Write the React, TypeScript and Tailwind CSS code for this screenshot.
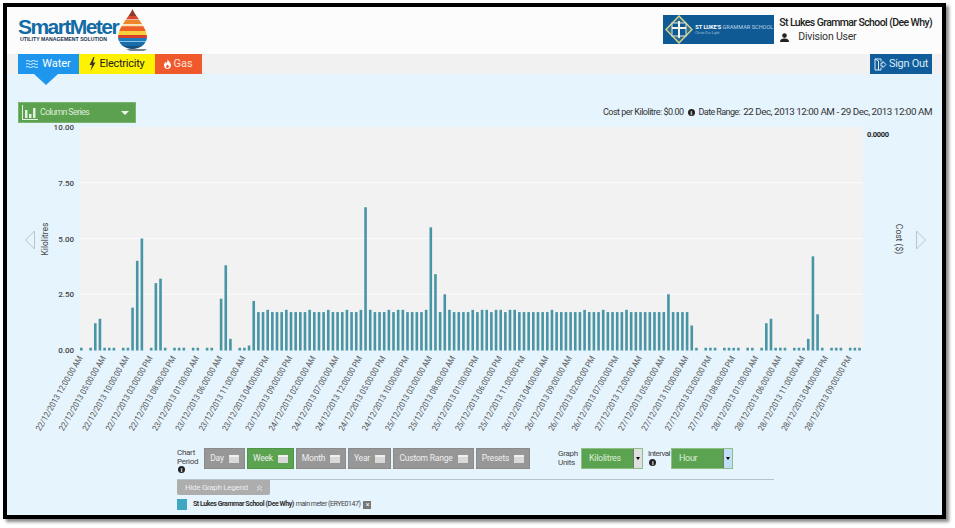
import React from "react";

const head = [
  0.1, 0, 0.1, 1.2, 1.4, 0.1, 0.1, 0.1, 0, 0.1, 0.1, 1.9, 4, 5, 0, 0.1, 3, 3.2, 0.1, 0, 0.1, 0.1, 0.1, 0, 0.1, 0.1, 0,
  0.1, 0.1, 0, 2.3, 3.8, 0.5, 0, 0.1, 0.1, 0.2, 2.2,
];
const tail = [
  0.1, 0, 0.1, 0.1, 0.1, 0, 0.1, 0.1, 0.1, 0.1, 0, 0.1, 0.1, 0, 0.1, 1.2, 1.4, 0.1, 0.1, 0.1, 0, 0.1, 0.1, 0.1, 0.5,
  4.2, 1.6, 0.1, 0, 0.1, 0.1, 0.1, 0, 0.1, 0.1, 0.1,
];
const highs = [40, 44, 49, 53, 57, 60, 62, 66, 68, 69, 74, 79, 84, 86, 87, 89, 90, 92, 93, 101, 108, 112, 117];
const spikes: Record<number, number> = { 61: 6.4, 75: 5.5, 76: 3.4, 78: 2.5, 126: 2.5, 131: 1.1 };

const usage = Array.from({ length: 168 }, (_, i) => {
  if (i < head.length) return head[i];
  if (i >= 132) return tail[i - 132];
  if (spikes[i]) return spikes[i];
  return highs.includes(i) ? 1.8 : 1.7;
});

const barX = (i: number) => 81.3 + i * 4.66;
const valueY = (v: number) => 350 - v * 22.3;

function axisLabel(i: number) {
  const day = 22 + Math.floor(i / 24);
  const hour = i % 24;
  const h = hour % 12 === 0 ? 12 : hour % 12;
  return `${day}/12/2013 ${String(h).padStart(2, "0")}:00:00 ${hour < 12 ? "AM" : "PM"}`;
}

const labelIdx = Array.from({ length: 34 }, (_, i) => i * 5);

// y, height, colour of each band in the drop
const dropBands: [number, number, string][] = [
  [0, 8, "#8f3a2c"],
  [8, 3.4, "#d9472b"],
  [12, 4.2, "#f0862a"],
  [16.8, 1.4, "#fbe7a8"],
  [18.2, 4.8, "#ee5f2a"],
  [23, 4, "#f8cf3c"],
  [27, 3, "#d8402c"],
  [30, 3, "#1c7dbd"],
  [33, 1, "#8cc4e6"],
  [34, 4, "#1a6ca8"],
  [38, 3, "#15507e"],
];

function Chart() {
  return (
    <svg viewBox="7 124 935 316" className="block w-[935px] h-[316px] mt-[1px]" fontFamily="Roboto, sans-serif">
      <rect x="80" y="127" width="783" height="223" fill="#f2f2f2" />
      {[7.5, 5, 2.5].map((v) => (
        <line key={v} x1="80" x2="863" y1={valueY(v)} y2={valueY(v)} stroke="#fbfbfb" strokeWidth="1" />
      ))}
      {usage.map((v, i) =>
        v > 0 ? (
          <rect key={i} x={barX(i) - 1.3} y={valueY(v)} width="2.6" height={v * 22.3 + 0.5} fill="#4795a6" />
        ) : null
      )}
      {["10.00", "7.50", "5.00", "2.50", "0.00"].map((t, i) => (
        <text key={t} x="74" y={130 + i * 55.8} textAnchor="end" fontSize="8" fontWeight="500" fill="#444">
          {t}
        </text>
      ))}
      <text x="889" y="137" textAnchor="end" fontSize="7.5" fontWeight="700" fill="#222" textLength="22">
        0.0000
      </text>
      <text transform="translate(47.5 239) rotate(-90)" textAnchor="middle" fontSize="8.5" fill="#444">
        Kilolitres
      </text>
      <text transform="translate(896 239) rotate(90)" textAnchor="middle" fontSize="8.5" fill="#444">
        Cost ($)
      </text>
      <path d="M34.5 231 L25.5 240 L34.5 249 Z" fill="none" stroke="#b9c4ca" />
      <path d="M916.5 231 L925.5 240 L916.5 249 Z" fill="none" stroke="#b9c4ca" />
      {labelIdx.map((i) => (
        <text
          key={i}
          transform={`translate(${barX(i) + 1.5} 358) rotate(-60)`}
          textAnchor="end"
          fontSize="8.5"
          fill="#555"
          textLength="85"
          lengthAdjust="spacingAndGlyphs"
        >
          {axisLabel(i)}
        </text>
      ))}
    </svg>
  );
}

function Logo() {
  return (
    <div className="flex items-start">
      <div className="w-[100px] pt-[10px] whitespace-nowrap">
        <div className="text-[21px] leading-[20px] font-bold tracking-[-1.55px] text-[#126ba5] [font-family:'Liberation_Sans',sans-serif]">
          SmartMeter
        </div>
        <div className="pl-[2px] text-[5.2px] leading-[5px] font-bold text-[#16324f] [font-family:'Liberation_Sans',sans-serif]">
          UTILITY MANAGEMENT SOLUTION
        </div>
      </div>
      <svg width="30" height="44" viewBox="0 0 30 44" className="mt-[1px]">
        <defs>
          <clipPath id="drop">
            <path d="M14.5 1 C17 8 29 19 29 29 C29 36 22 41 14.5 41 C7 41 0 36 0 29 C0 19 12 8 14.5 1 Z" />
          </clipPath>
        </defs>
        <path d="M8 41 H29 L26 43 H12 Z" fill="#77858f" />
        <g clipPath="url(#drop)">
          {dropBands.map(([y, h, c]) => (
            <rect key={y} x="0" y={y} width="30" height={h} fill={c} />
          ))}
        </g>
      </svg>
    </div>
  );
}

function SchoolLogo() {
  return (
    <div className="w-[111px] h-[29px] bg-[#0f5a94] flex items-center pl-[2px] shrink-0">
      <svg width="28" height="29" viewBox="0 0 28 29">
        <path d="M14 1 L27 14.5 L14 28 L1 14.5 Z" fill="#2e6e8e" stroke="#d9d48a" strokeWidth="1.4" />
        <rect x="7" y="8" width="14" height="13" fill="#0f5a94" stroke="#e8e8d8" />
        <path d="M14 6 V23 M7 13 H21" stroke="#f4f4e6" strokeWidth="2" />
      </svg>
      <div className="pl-[2px] whitespace-nowrap">
        <div className="text-[5.6px] leading-[7px] text-[#bcd3e6]">
          <span className="font-bold text-white">ST LUKE'S</span> GRAMMAR SCHOOL
        </div>
        <div className="text-[3.5px] leading-[4px] text-[#9fc0da]">Christ Our Light</div>
      </div>
    </div>
  );
}

function Info() {
  return (
    <span className="inline-flex w-[7px] h-[7px] rounded-full bg-[#222] text-white text-[6px] leading-[7px] font-bold justify-center">
      i
    </span>
  );
}

function PeriodButton({ label, w, active }: { label: string; w: string; active?: boolean }) {
  return (
    <div
      className={`${w} h-[21px] flex items-center justify-center gap-[5px] border text-[8.5px] tracking-[-0.2px] text-[#f0f0f0] ${
        active ? "bg-[#5ba351] border-[#4d9445]" : "bg-[#979797] border-[#8a8a8a]"
      }`}
    >
      {label}
      <span className="w-[10px] h-[8px] bg-[#d9d9d9] border-t-2 border-[#f0f0f0]" />
    </div>
  );
}

function UnitSelect({ label, light }: { label: string; light?: boolean }) {
  return (
    <div className="w-[62px] h-[21px] flex border border-[#8fbf87] shrink-0">
      <div className="flex-1 bg-[#5ba351] text-[#dbeed7] text-[9px] leading-[19px] pl-[7px]">{label}</div>
      <div
        className={`w-[9px] flex items-center justify-center border-l border-[#777] ${
          light ? "bg-[#bfe0f7]" : "bg-[#e0e0e0]"
        }`}
      >
        <span className="border-x-[2px] border-x-transparent border-t-[3px] border-t-black" />
      </div>
    </div>
  );
}

export default function App() {
  return (
    <div className="w-[955px] h-[528px] bg-white pl-[3px] pt-[3px] overflow-hidden [font-family:Roboto,sans-serif]">
      <div className="w-[943px] h-[516px] border-4 border-black shadow-[3px_3px_3px_#8a8a8a] bg-[#e6f4fe] flex flex-col">
        <header className="h-[47px] bg-[#fcfcfc] flex justify-between pl-[11px] pr-[10px]">
          <Logo />
          <div className="flex pt-[8px] gap-[5px]">
            <SchoolLogo />
            <div className="text-[10.5px] tracking-[-0.6px] text-[#222] font-medium leading-[14px] pt-[1px] whitespace-nowrap">
              St Lukes Grammar School (Dee Why)
              <div className="flex items-center gap-[9px] pl-[1px] font-normal tracking-[-0.2px] text-[#333]">
                <svg width="9" height="9" viewBox="0 0 9 9">
                  <circle cx="4.5" cy="2.6" r="2.3" fill="#222" />
                  <path d="M0 9 C0 6 2.5 5.5 4.5 5.5 S9 6 9 9 Z" fill="#222" />
                </svg>
                Division User
              </div>
            </div>
          </div>
        </header>

        <nav className="h-[20px] bg-[#f1f1f1] flex pl-[11px] pr-[10px] text-[11px]">
          <div className="relative w-[61px] bg-[#1f96ee] text-white flex items-center justify-center gap-[4px]">
            <svg width="12" height="8" viewBox="0 0 12 8" fill="none" stroke="#dff0fd" strokeWidth="1">
              <path d="M0 1 Q1.5 0 3 1 T6 1 T9 1 T12 1 M0 4 Q1.5 3 3 4 T6 4 T9 4 T12 4 M0 7 Q1.5 6 3 7 T6 7 T9 7 T12 7" />
            </svg>
            Water
            <span className="absolute left-[16px] top-[20px] border-x-[12px] border-x-transparent border-t-[11px] border-t-[#1f96ee]" />
          </div>
          <div className="w-[76px] bg-[#fff200] text-[#222] tracking-[-0.25px] flex items-center justify-center gap-[3px]">
            <svg width="7" height="14" viewBox="0 0 7 14">
              <path d="M4.5 0 L0.5 8 H3 L1.5 14 L6.5 5.5 H4 L5.5 0 Z" fill="#333" />
            </svg>
            Electricity
          </div>
          <div className="w-[47px] bg-[#f0592b] text-[#fbe3da] flex items-center justify-center gap-[2px]">
            <svg width="7" height="10" viewBox="0 0 7 10">
              <path
                fillRule="evenodd"
                d="M3.8 0 C4 2 7 3.5 7 6.3 C7 8.5 5.4 10 3.5 10 C1.6 10 0 8.5 0 6.3 C0 4.6 1 3.5 1.6 2.8 C1.8 3.6 2.2 4 2.6 4 C3.2 3 3.8 1.5 3.8 0 Z M3.5 5.5 C2.6 6.4 2 7 2 7.8 C2 8.5 2.7 9 3.5 9 C4.3 9 5 8.5 5 7.8 C5 7 4.4 6.4 3.5 5.5 Z"
                fill="#fff"
              />
            </svg>
            Gas
          </div>
          <div className="ml-auto w-[62px] bg-[#115d9b] text-[#dcebf6] tracking-[-0.3px] flex items-center justify-center gap-[2px]">
            <svg width="13" height="13" viewBox="0 0 13 13" fill="none" stroke="#dcebf6" strokeWidth="1">
              <path d="M7 3.5 V1 H1 V12 H7 V9.5 M1 1 L4.5 3 V12 M7 5 H9 V3.5 L12 6.5 L9 9.5 V8 H7 Z" />
            </svg>
            Sign Out
          </div>
        </nav>

        <main className="flex-1 flex flex-col">
          <div className="mt-[28px] h-[21px] flex items-center justify-between pl-[11px] pr-[10px]">
            <div className="w-[118px] h-[21px] bg-[#5ba14f] border border-[#7ab56f] flex items-center pl-[3px] pr-[6px] text-[9px] tracking-[-0.7px] text-[#dcebd8]">
              <svg width="16" height="15" viewBox="0 0 16 15" fill="#e4f0e1">
                <path d="M0 0 H1 V14 H16 V15 H0 Z" />
                <path d="M3 5 H5.5 V13 H3 Z M7 9 H9.5 V13 H7 Z M11 3 H13.5 V13 H11 Z" />
              </svg>
              <span className="pl-[2px]">Column Series</span>
              <span className="ml-auto border-x-[4.5px] border-x-transparent border-t-[4px] border-t-[#eef6ec]" />
            </div>
            <div className="flex items-center text-[#333] whitespace-nowrap text-[9.8px] tracking-[-0.45px]">
              <span className="text-[9px] tracking-[-0.5px]">Cost per Kilolitre: $0.00</span>
              <span className="flex mx-[4px]">
                <Info />
              </span>
              <span className="text-[9px] tracking-[-0.6px]">Date Range:</span>
              <span className="pl-[3px]">22 Dec, 2013 12:00 AM - 29 Dec, 2013 12:00 AM</span>
            </div>
          </div>

          <Chart />

          <div className="pl-[170px] mt-[8px] text-[8px] tracking-[-0.3px] leading-[9px] text-[#444]">
            <div className="flex items-start w-[597px] h-[32px] border-b border-[#b8c4c8]">
              <div className="w-[27px] shrink-0 leading-[9px]">
                Chart
                <br />
                Period
                <div className="leading-[8px] pl-[1px]">
                  <Info />
                </div>
              </div>
              <div className="flex gap-[2px]">
                <PeriodButton label="Day" w="w-[41px]" />
                <PeriodButton label="Week" w="w-[47px]" active />
                <PeriodButton label="Month" w="w-[50px]" />
                <PeriodButton label="Year" w="w-[43px]" />
                <PeriodButton label="Custom Range" w="w-[81px]" />
                <PeriodButton label="Presets" w="w-[54px]" />
              </div>
              <div className="w-[23px] ml-[28px] pt-[1px] leading-[9px]">
                Graph
                <br />
                Units
              </div>
              <UnitSelect label="Kilolitres" />
              <div className="w-[28px] pl-[5px] pt-[1px] leading-[10px] tracking-[-0.55px]">
                Interval
                <div className="pl-[1px] leading-[8px]">
                  <Info />
                </div>
              </div>
              <UnitSelect label="Hour" light />
            </div>
            <div className="w-[93px] h-[15px] bg-[#adadad] rounded-b-[2px] flex items-center justify-between pl-[8px] pr-[7px] text-[#ececec] whitespace-nowrap">
              Hide Graph Legend
              <svg width="7" height="6" viewBox="0 0 7 6" fill="none" stroke="#e4e4e4">
                <path d="M1 3 L3.5 1 L6 3 M1 5.5 L3.5 3.5 L6 5.5" />
              </svg>
            </div>
            <div className="flex items-center h-[11px] mt-[4px] whitespace-nowrap text-[7px] tracking-[-0.45px]">
              <span className="w-[10px] h-[11px] bg-[#3fa7c1]" />
              <span className="pl-[6px] font-bold text-[#333]">St Lukes Grammar School (Dee Why)</span>
              <span className="pl-[2px]">main meter (ERYE0147)</span>
              <span className="ml-[3px] w-[8px] h-[8px] bg-[#777] text-white leading-[8px] text-center">×</span>
            </div>
          </div>
        </main>
      </div>
    </div>
  );
}
